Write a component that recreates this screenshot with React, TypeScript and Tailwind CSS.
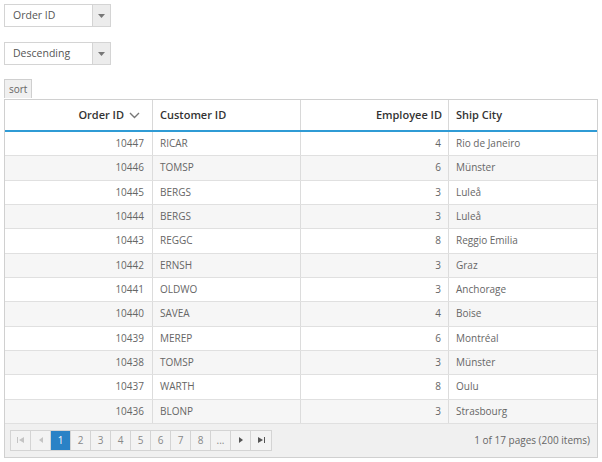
import React from "react";

const rows = [
  ["10447", "RICAR", "4", "Rio de Janeiro"],
  ["10446", "TOMSP", "6", "Münster"],
  ["10445", "BERGS", "3", "Luleå"],
  ["10444", "BERGS", "3", "Luleå"],
  ["10443", "REGGC", "8", "Reggio Emilia"],
  ["10442", "ERNSH", "3", "Graz"],
  ["10441", "OLDWO", "3", "Anchorage"],
  ["10440", "SAVEA", "4", "Boise"],
  ["10439", "MEREP", "6", "Montréal"],
  ["10438", "TOMSP", "3", "Münster"],
  ["10437", "WARTH", "8", "Oulu"],
  ["10436", "BLONP", "3", "Strasbourg"],
];

const Dropdown = ({ label }: { label: string }) => (
  <div className="flex w-[107px] h-[23px] border border-[#d4d4d4] bg-white">
    <span className="flex-1 pl-[8px] leading-[21px] text-[10.5px] text-[#555]">{label}</span>
    <span className="w-[18px] border-l border-[#d4d4d4] bg-[#ececec] flex items-center justify-center">
      <svg width="7" height="4" viewBox="0 0 7 4">
        <path d="M0 0h7L3.5 4z" fill="#777" />
      </svg>
    </span>
  </div>
);

const PagerButton = ({ children, active }: { children: React.ReactNode; active?: boolean }) => (
  <div
    className={
      active
        ? "w-[20px] h-[19px] flex items-center justify-center bg-[#2a82c6] text-white border-r border-[#d4d4d4]"
        : "w-[20px] h-[19px] flex items-center justify-center text-[#888] border-r border-[#d4d4d4] last:border-r-0"
    }
  >
    {children}
  </div>
);

const App = () => {
  return (
    <div className="w-[602px] h-[462px] bg-white pl-[4px] pt-[4px] font-['Open_Sans',sans-serif]">
      <Dropdown label="Order ID" />
      <div className="mt-[15px]">
        <Dropdown label="Descending" />
      </div>
      <div className="mt-[14px] inline-block h-[19px] px-[4px] border border-b-0 border-[#cfcfcf] bg-[#f0f0f0] text-[10px] leading-[18px] text-[#666]">
        sort
      </div>

      <div className="w-[594px] border border-[#d0d0d0]">
        <div className="grid grid-cols-4 h-[32px] border-b-2 border-[#2f9bd5] text-[11px] font-semibold text-[#333]">
          <div className="flex items-center justify-end pr-[12px] border-r border-[#d8d8d8]">
            Order ID
            <svg className="ml-[5px]" width="11" height="7" viewBox="0 0 11 7">
              <path d="M1 1l4.5 4.5L10 1" fill="none" stroke="#777" strokeWidth="1.4" />
            </svg>
          </div>
          <div className="flex items-center pl-[7px] border-r border-[#d8d8d8]">Customer ID</div>
          <div className="flex items-center justify-end pr-[6px] border-r border-[#d8d8d8]">Employee ID</div>
          <div className="flex items-center pl-[7px]">Ship City</div>
        </div>

        {rows.map((r, i) => (
          <div
            key={r[0]}
            className={
              "grid grid-cols-4 h-[24.33px] border-b border-[#e0e0e0] text-[10px] text-[#666] " +
              (i % 2 === 1 ? "bg-[#f6f6f6]" : "bg-white")
            }
          >
            <div className="flex items-center justify-end pr-[8px] border-r border-[#dcdcdc]">{r[0]}</div>
            <div className="flex items-center pl-[7px] border-r border-[#dcdcdc]">{r[1]}</div>
            <div className="flex items-center justify-end pr-[7px] border-r border-[#dcdcdc]">{r[2]}</div>
            <div className="flex items-center pl-[7px]">{r[3]}</div>
          </div>
        ))}

        <div className="flex items-center justify-between h-[33px] bg-[#f0f0f0] pl-[5px] pr-[7px]">
          <div className="flex border border-[#d4d4d4] bg-[#f3f3f3] text-[10px]">
            <PagerButton>
              <svg width="7" height="6" viewBox="0 0 7 6">
                <path d="M0 0h1v6H0zM7 0v6L2 3z" fill="#c4c4c4" />
              </svg>
            </PagerButton>
            <PagerButton>
              <svg width="4" height="6" viewBox="0 0 4 6">
                <path d="M4 0v6L0 3z" fill="#c4c4c4" />
              </svg>
            </PagerButton>
            <PagerButton active>1</PagerButton>
            <PagerButton>2</PagerButton>
            <PagerButton>3</PagerButton>
            <PagerButton>4</PagerButton>
            <PagerButton>5</PagerButton>
            <PagerButton>6</PagerButton>
            <PagerButton>7</PagerButton>
            <PagerButton>8</PagerButton>
            <PagerButton>...</PagerButton>
            <PagerButton>
              <svg width="4" height="6" viewBox="0 0 4 6">
                <path d="M0 0v6L4 3z" fill="#555" />
              </svg>
            </PagerButton>
            <PagerButton>
              <svg width="7" height="6" viewBox="0 0 7 6">
                <path d="M0 0v6L5 3zM6 0h1v6H6z" fill="#555" />
              </svg>
            </PagerButton>
          </div>
          <span className="text-[10px] text-[#666]">1 of 17 pages (200 items)</span>
        </div>
      </div>
    </div>
  );
};

export default App;
